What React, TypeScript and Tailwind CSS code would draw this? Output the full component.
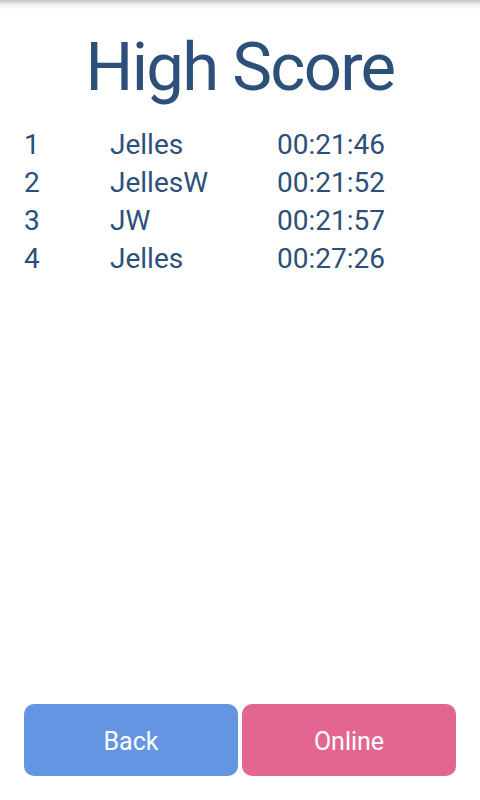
import React from 'react';

const scores = [
  { rank: 1, name: 'Jelles', time: '00:21:46' },
  { rank: 2, name: 'JellesW', time: '00:21:52' },
  { rank: 3, name: 'JW', time: '00:21:57' },
  { rank: 4, name: 'Jelles', time: '00:27:26' },
];

export default function App() {
  return (
    <div className="relative flex h-[800px] w-[480px] flex-col bg-white font-['Roboto',sans-serif]">
      {/* action bar shadow */}
      <div className="absolute left-0 right-0 top-0 h-[10px] bg-gradient-to-b from-[#c4c4c4] via-[#f3f3f3] to-white" />

      <h1 className="mt-[34px] text-center text-[67px] leading-[67px] tracking-[-1.7px] text-[#2c5079]">High Score</h1>

      <div className="mt-[25px] flex flex-col text-[28px] leading-[38px] text-[#2c5079]">
        {scores.map((s) => (
          <div key={s.rank} className="flex">
            <span className="w-[110px] pl-[24px]">{s.rank}</span>
            <span className="w-[167px]">{s.name}</span>
            <span>{s.time}</span>
          </div>
        ))}
      </div>

      <div className="mt-auto mb-[24px] flex gap-[4px] px-[24px]">
        <button className="h-[72px] flex-1 rounded-[10px] bg-[#6495e2] pt-[3px] text-[25px] text-white">Back</button>
        <button className="h-[72px] flex-1 rounded-[10px] bg-[#e36692] pt-[3px] text-[25px] text-white">Online</button>
      </div>
    </div>
  );
}
